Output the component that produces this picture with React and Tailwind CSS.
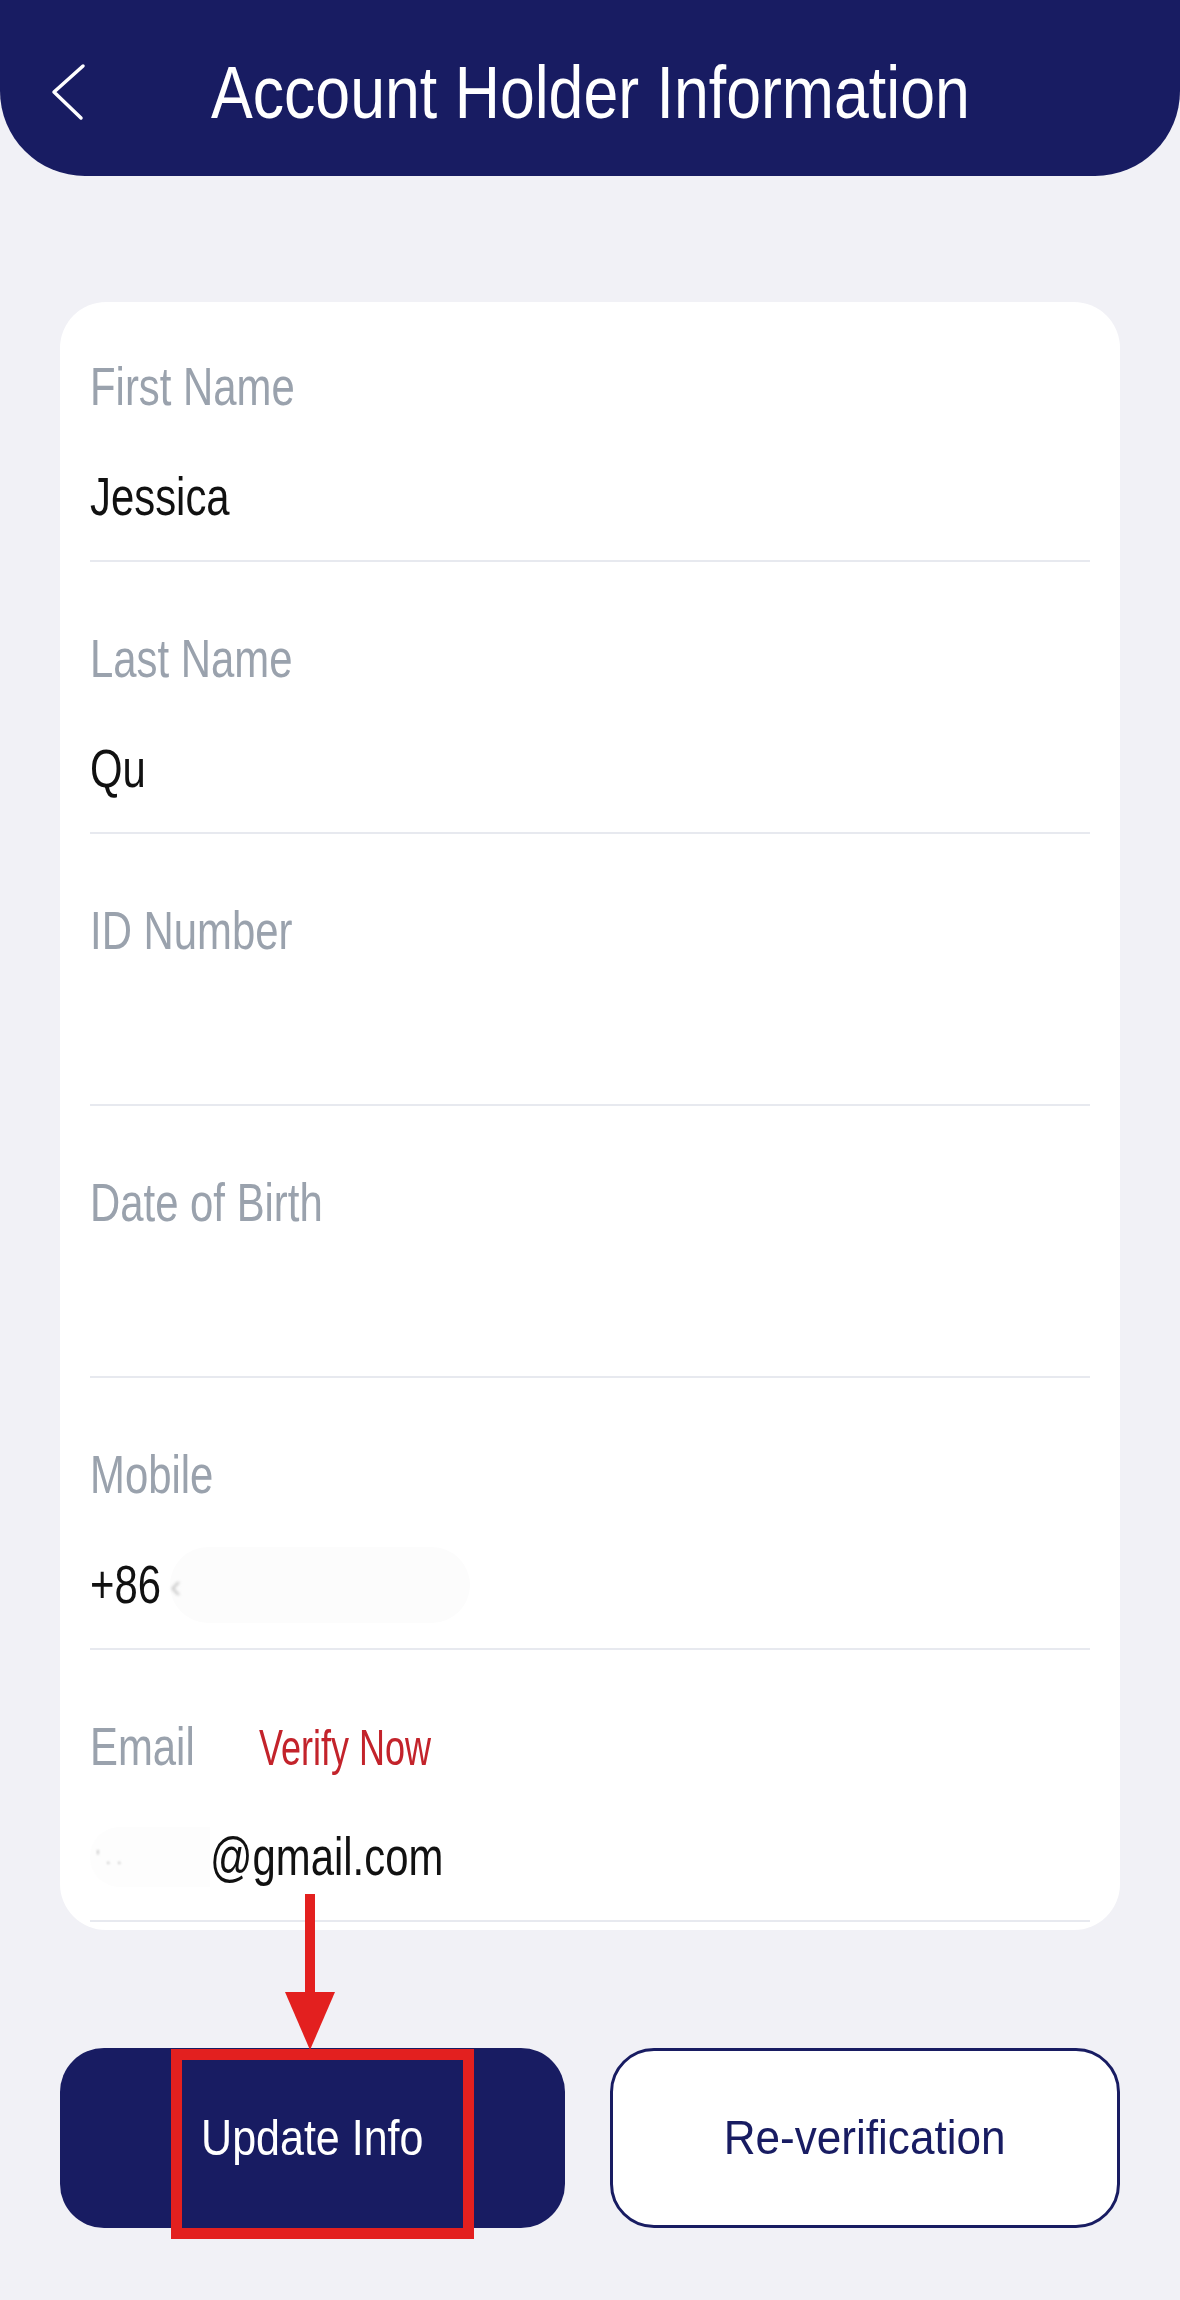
import React from "react";

// Account holder screen: header, info card, two action buttons
const fields = [
  { label: "First Name", value: "Jessica" },
  { label: "Last Name", value: "Qu" },
  { label: "ID Number", value: "" },
  { label: "Date of Birth", value: "" },
  { label: "Mobile", value: "+86", blurred: "mobile" },
  { label: "Email", value: "@gmail.com", blurred: "email", verify: true },
];

// the app font is a narrow sans; squeeze Liberation Sans to match
const Narrow = ({ children }) => (
  <span className="inline-block origin-left scale-x-[0.79] whitespace-nowrap">{children}</span>
);

const InfoRow = ({ field }) => {
  return (
    <div className="flex flex-col pt-[67px] first:pt-[55px] border-b-2 border-[#e7e9ef]">
      <div className="flex items-baseline h-[60px] leading-[60px]">
        <span className="text-[53px] text-[#9aa2ad]">
          <Narrow>{field.label}</Narrow>
        </span>
        {field.verify && (
          <span className="ml-[36px] text-[50px] text-[#c3232b]">
            <span className="inline-block origin-left scale-x-[0.72] whitespace-nowrap">Verify Now</span>
          </span>
        )}
      </div>
      <div className="flex items-center mt-[50px] mb-[33px] h-[60px] leading-[60px] text-[53px] text-[#111111]">
        {field.blurred === "email" && (
          <span className="flex items-center w-[120px] h-[60px] rounded-l-full bg-[#fdfdfd]">
            <span className="ml-[6px] text-[20px] text-[#c4c4c4] blur-[1px]">' . .</span>
          </span>
        )}
        <Narrow>{field.value || "\u00a0"}</Narrow>
        {field.blurred === "mobile" && (
          <span className="flex items-center ml-[-10px] w-[300px] h-[76px] rounded-full bg-[#fcfcfc]">
            <span className="text-[34px] text-[#c8c8c8] blur-[1.5px]">‹</span>
          </span>
        )}
      </div>
    </div>
  );
};

export default function App() {
  return (
    <div className="w-full min-h-[2300px] bg-[#f1f1f6] font-['Liberation_Sans',Arial,sans-serif]">
      {/* header */}
      <div className="grid grid-cols-[110px_1fr_110px] items-center h-[176px] bg-[#181c62] rounded-b-[85px]">
        <div className="pl-[50px] pt-[8px]">
          <svg width="36" height="58" viewBox="0 0 36 58" fill="none">
            <polyline
              points="33,3 4,29 31,55"
              stroke="#ffffff"
              strokeWidth="3.5"
              strokeLinecap="round"
              strokeLinejoin="round"
            />
          </svg>
        </div>
        <div className="pt-[8px] text-center text-white text-[75px] leading-none whitespace-nowrap">
          <span className="inline-block origin-center scale-x-[0.835]">Account Holder Information</span>
        </div>
        <div />
      </div>

      {/* info card */}
      <div className="mx-[60px] mt-[126px] px-[30px] pb-[8px] bg-white rounded-[46px]">
        {fields.map((field) => (
          <InfoRow key={field.label} field={field} />
        ))}
      </div>

      {/* buttons */}
      <div className="relative mx-[60px] mt-[118px] flex gap-[45px]">
        <button className="flex-1 h-[180px] rounded-[44px] bg-[#181c62] text-white text-[50px]">
          <span className="inline-block origin-center scale-x-[0.86]">Update Info</span>
        </button>
        <button className="flex-1 h-[180px] rounded-[44px] bg-white border-[3px] border-[#181c62] text-[#181c62] text-[49px]">
          <span className="inline-block origin-center scale-x-[0.9]">Re-verification</span>
        </button>

        {/* red annotation */}
        <div className="absolute left-[111px] top-[1px] w-[303px] h-[190px] border-[11px] border-[#e3201f]" />
        <svg
          className="absolute left-[225px] top-[-154px]"
          width="50"
          height="156"
          viewBox="0 0 50 156"
        >
          <rect x="20" y="0" width="10" height="100" fill="#e3201f" />
          <polygon points="0,98 50,98 25,156" fill="#e3201f" />
        </svg>
      </div>
    </div>
  );
}
